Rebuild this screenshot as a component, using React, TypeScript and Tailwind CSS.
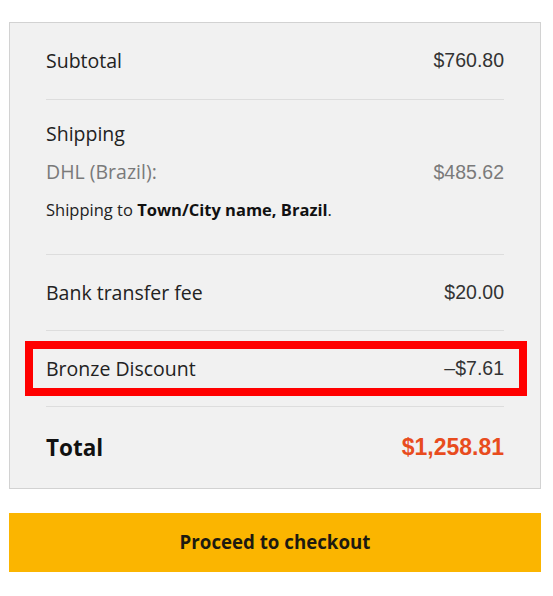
const label = "font-['Open_Sans',sans-serif] text-[19.5px] text-[#222]";
const amount = "font-['Liberation_Sans',Arial,sans-serif] text-[19.5px] text-[#333]";

function Row({
  name,
  value,
  highlight = false,
}: {
  name: string;
  value: string;
  highlight?: boolean;
}) {
  return (
    <div className="relative flex h-[76px] items-center justify-between border-b border-[#dddddd]">
      <span className={label}>{name}</span>
      <span className={amount}>{value}</span>
      {highlight && (
        <div className="pointer-events-none absolute top-[10px] bottom-[10px] left-[-21px] right-[-23px] border-[8px] border-[#ff0000]" />
      )}
    </div>
  );
}

export default function App() {
  return (
    <div className="min-h-[596px] w-[553px] bg-white pt-[22px] pl-[9px]">
      <div className="w-[532px] border border-[#d2d2d2] bg-[#f1f1f1] px-[36px]">
        <div className="h-[77px] flex items-center justify-between border-b border-[#dddddd]">
          <span className={label}>Subtotal</span>
          <span className={amount}>$760.80</span>
        </div>

        <div className="border-b border-[#dddddd] pt-[20px] pb-[32px]">
          <div className={`${label} leading-[28px]`}>Shipping</div>
          <div className="mt-[10px] flex items-center justify-between leading-[28px]">
            <span className="font-['Open_Sans',sans-serif] text-[19.5px] text-[#7a7a7a]">
              DHL (Brazil):
            </span>
            <span className="font-['Liberation_Sans',Arial,sans-serif] text-[19.5px] text-[#7a7a7a]">
              $485.62
            </span>
          </div>
          <p className="mt-[12px] font-['Open_Sans',sans-serif] text-[16.5px] leading-[24px] text-[#222]">
            Shipping to <strong className="font-bold text-[#111]">Town/City name, Brazil</strong>.
          </p>
        </div>

        <Row name="Bank transfer fee" value="$20.00" />
        <Row name="Bronze Discount" value="–$7.61" highlight />

        <div className="flex h-[81px] items-center justify-between">
          <span className="font-['Open_Sans',sans-serif] text-[22.5px] font-bold text-[#111]">Total</span>
          <span className="font-['Liberation_Sans',Arial,sans-serif] text-[23px] font-bold text-[#e84c1e]">
            $1,258.81
          </span>
        </div>
      </div>

      <button className="mt-[24px] flex h-[59px] w-[532px] items-center justify-center bg-[#fbb500] font-['Open_Sans',sans-serif] text-[18.7px] font-bold text-[#1d1a10]">
        Proceed to checkout
      </button>
    </div>
  );
}
